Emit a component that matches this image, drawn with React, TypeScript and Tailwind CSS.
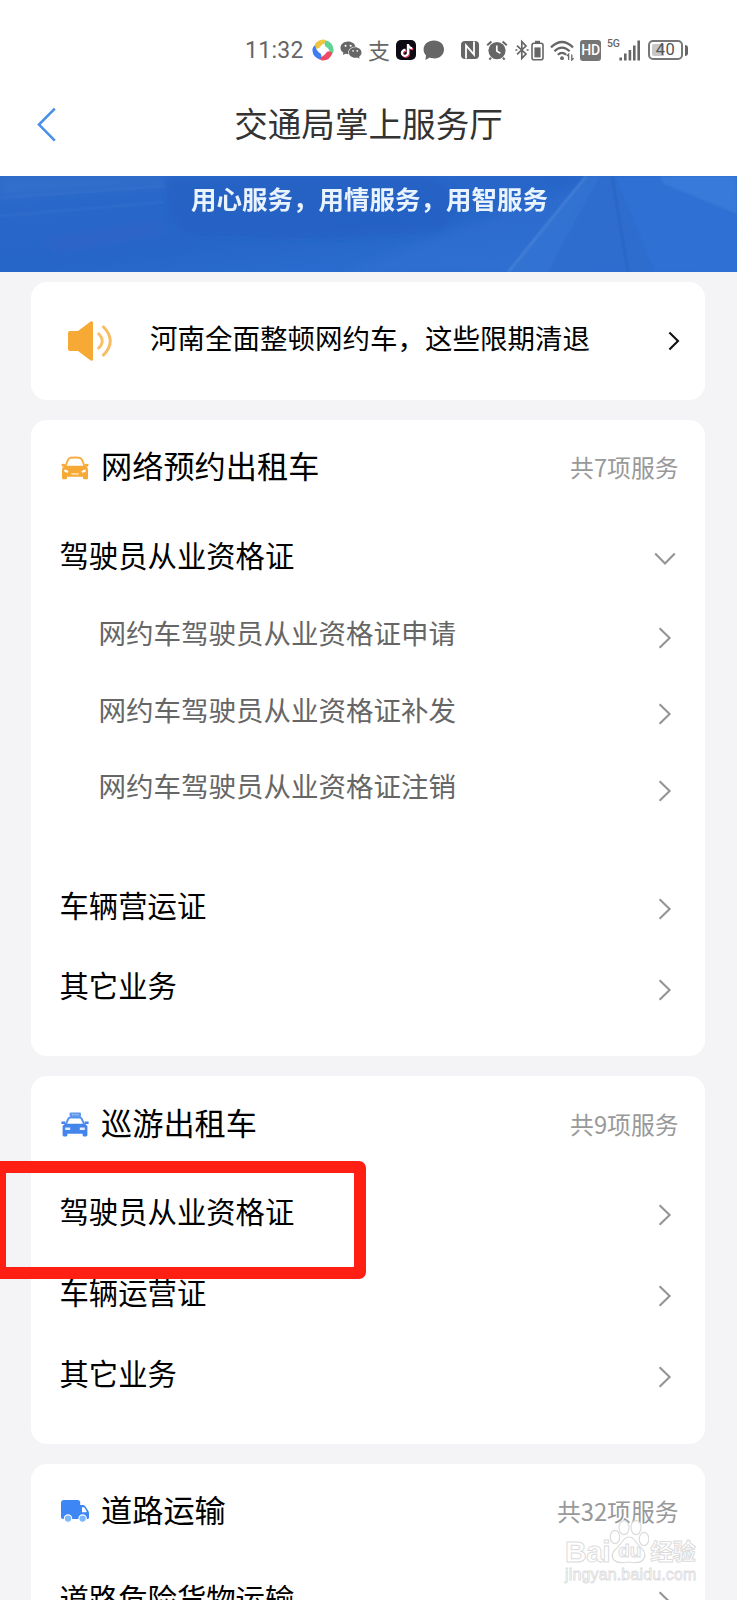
import type { ReactNode } from "react";
import clsx from "clsx";
import { AiFillWechat } from "react-icons/ai";
import { FaTiktok } from "react-icons/fa";

interface ServiceItem {
  label: string;
  children?: string[];
}

interface ServiceGroup {
  title: string;
  count: number;
  icon: ReactNode;
  items: ServiceItem[];
}

const CarIcon = () => (
  <svg width="28" height="24" viewBox="0 0 28 24" fill="none">
    <path
      d="M4.4 10.5 L6.8 4.2 Q7.6 2.2 9.8 1.8 Q14 1.3 18.2 1.8 Q20.4 2.2 21.2 4.2 L23.6 10.5"
      stroke="#f7ad40"
      strokeWidth="1.9"
    />
    <path
      d="M3.4 9.8 H24.6 Q27 11.2 27 14 V22 Q27 23.2 25.6 23.2 H23.2 Q22 23.2 22 22 V20.8 H6 V22 Q6 23.2 4.8 23.2 H2.4 Q1 23.2 1 22 V14 Q1 11.2 3.4 9.8Z"
      fill="#f6a935"
    />
    <path d="M.4 8.2 Q2.4 7 4.6 8.8 L3.6 10.4 H1Z M27.6 8.2 Q25.6 7 23.4 8.8 L24.4 10.4 H27Z" fill="#f6a935" />
    <path d="M3.4 13.4 Q6 13.4 7.6 15.4 L7 16.6 Q4.4 16.8 3.2 15.6Z M24.6 13.4 Q22 13.4 20.4 15.4 L21 16.6 Q23.6 16.8 24.8 15.6Z M10 17.6 H18 L17.4 18.6 H10.6Z" fill="#fff" />
  </svg>
);

const TaxiIcon = () => (
  <svg width="28" height="25" viewBox="0 0 28 25" fill="none">
    <rect x="8.6" y=".6" width="11.4" height="4.4" rx="1" fill="#5f98ee" />
    <path d="M11 2.8 H18" stroke="#b9d3fa" strokeWidth="1.1" strokeDasharray="1.4 .7" />
    <path d="M4.8 12.4 L7.2 7 Q7.9 5.5 9.6 5.5 H18.4 Q20.1 5.5 20.8 7 L23.2 12.4" stroke="#5593ed" strokeWidth="1.9" />
    <path
      d="M4 11.8 H24 L26.4 14 V23 Q26.4 24.4 25 24.4 H22.8 Q21.6 24.4 21.6 23 V21.8 H6.4 V23 Q6.4 24.4 5.2 24.4 H3 Q1.6 24.4 1.6 23 V14Z"
      fill="#4385ea"
    />
    <path d="M.4 9.6 H4.4 L4 12 H.4Z M27.6 9.6 H23.6 L24 12 H27.6Z" fill="#4385ea" />
    <path d="M4.2 15.4 H9.2 V18 H4.2Z M18.8 15.4 H23.8 V18 H18.8Z" fill="#e4eefd" />
  </svg>
);

const TruckIcon = () => (
  <svg width="29" height="23" viewBox="0 0 29 23">
    <path d="M3 0 H16.6 Q19.2 0 19.2 2.6 V5 H21.8 Q23.4 5 24.4 6.4 L27.4 11 Q28 12 28 13.2 V17.4 Q28 19 26.4 19 H2 Q0 19 0 17 V3 Q0 0 3 0Z" fill="#3c86f6" />
    <path d="M21 7.2 H22.4 Q23.2 7.2 23.7 8 L25.6 11.2 Q26 12.2 25 12.2 H21Z" fill="#fff" />
    <circle cx="7" cy="18.6" r="3.7" fill="#7cb6fb" stroke="#fff" strokeWidth="1.1" />
    <circle cx="21.6" cy="18.6" r="3.7" fill="#7cb6fb" stroke="#fff" strokeWidth="1.1" />
  </svg>
);

const groups: ServiceGroup[] = [
  {
    title: "网络预约出租车",
    count: 7,
    icon: <CarIcon />,
    items: [
      {
        label: "驾驶员从业资格证",
        children: [
          "网约车驾驶员从业资格证申请",
          "网约车驾驶员从业资格证补发",
          "网约车驾驶员从业资格证注销",
        ],
      },
      { label: "车辆营运证" },
      { label: "其它业务" },
    ],
  },
  {
    title: "巡游出租车",
    count: 9,
    icon: <TaxiIcon />,
    items: [{ label: "驾驶员从业资格证" }, { label: "车辆运营证" }, { label: "其它业务" }],
  },
  {
    title: "道路运输",
    count: 32,
    icon: <TruckIcon />,
    items: [{ label: "道路危险货物运输" }],
  },
];

const Chevron = ({ open }: { open?: boolean }) => (
  <svg
    width="22"
    height="22"
    viewBox="0 0 22 22"
    fill="none"
    stroke="#949494"
    strokeWidth="2.1"
    className={clsx("mt-[5px] shrink-0", open && "rotate-90")}
  >
    <path d="M5.6 1.2 L15.6 11 L5.6 20.8" />
  </svg>
);

const StatusBar = () => (
  <div className="flex h-[76px] items-center pt-6 pl-[245px] text-[#666]">
    <span className="w-[60px] font-[Roboto] text-[23px] leading-none tracking-[0.3px] whitespace-nowrap">11:32</span>
    <svg className="ml-[7px]" width="22" height="22" viewBox="0 0 22 22">
      <path d="M1.6 8.4 Q3.6 .8 11.2 .4 Q14.8 .8 15.2 3.4 Q10 4.4 7.4 8.8 Q4 10.8 1.6 8.4Z" fill="#f0c545" />
      <path d="M14.2 1.6 Q21 3.6 21.6 10.8 Q21.6 14.4 18.8 15.6 Q18 10 13.2 7.2 Q11.6 3.8 14.2 1.6Z" fill="#5fd492" />
      <path d="M20.4 14 Q18 21.4 10.8 21.6 Q7.2 21.2 6.8 18.6 Q12 17.6 14.6 13.2 Q18 11.2 20.4 14Z" fill="#ee4a63" />
      <path d="M7.8 20.4 Q1 18.4 .4 11.2 Q.4 7.6 3.2 6.4 Q4 12 8.8 14.8 Q10.4 18.2 7.8 20.4Z" fill="#3f7df0" />
    </svg>
    <AiFillWechat className="ml-[5px] shrink-0" size={24} />
    <span className="mb-[3px] ml-[5px] w-[22px] text-[22px] leading-none">支</span>
    <div className="ml-[6px] flex h-5 w-5 items-center justify-center rounded-[5px] bg-[#0c0b14]">
      <FaTiktok className="text-white drop-shadow-[1px_1px_0_#e8365c]" size={13} />
    </div>
    <svg className="ml-[7px]" width="22" height="21" viewBox="0 0 22 21" fill="currentColor">
      <path d="M11 .6 C17 .6 21 4.4 21 9.6 C21 14.8 17 18.4 11.4 18.4 C9.4 18.4 8.2 18.2 6.8 17.6 L2.4 20 L3 15.4 C1.4 13.8 .6 12 .6 9.6 C.6 4.4 5 .6 11 .6Z" />
    </svg>
    <svg className="ml-[15px]" width="20" height="20" viewBox="0 0 20 20" fill="none">
      <path d="M5 1 H15 Q19 1 19 5 V15 Q19 19 15 19 H5 Q1 19 1 15 V5 Q1 1 5 1Z" fill="currentColor" />
      <path d="M6 18.6 V5.4 L14 14.6 V1.4" stroke="#fff" strokeWidth="1.8" />
    </svg>
    <svg className="ml-[6px]" width="22" height="21" viewBox="0 0 22 21" fill="none">
      <circle cx="11" cy="10.6" r="8.6" fill="currentColor" />
      <path d="M1.2 5.2 L5.4 1.4 M20.8 5.2 L16.6 1.4 M5 17.6 L3.4 19.6 M17 17.6 L18.6 19.6" stroke="currentColor" strokeWidth="2" />
      <path d="M10.8 5.6 V11 L14.4 13.4" stroke="#fff" strokeWidth="1.7" />
    </svg>
    <svg className="ml-[7px]" width="14" height="22" viewBox="0 0 14 22" fill="none" stroke="currentColor" strokeWidth="1.7">
      <path d="M2 6.6 L11 15 L6.8 19.4 V2.6 L11 7 L2 15.4" />
      <path d="M.4 11 H2.4 M11.6 11 H13.6" />
    </svg>
    <svg className="ml-[2px]" width="13" height="21" viewBox="0 0 13 21" fill="none">
      <path d="M4 .8 H9 V3 H4Z" fill="currentColor" />
      <rect x="1" y="3.2" width="11" height="16.6" rx="2" stroke="currentColor" strokeWidth="1.6" />
      <path d="M3.4 7.4 H9.6 V17.4 H3.4Z" fill="currentColor" />
    </svg>
    <svg className="ml-[6px]" width="25" height="21" viewBox="0 0 25 21" fill="none" stroke="currentColor" strokeWidth="2.2">
      <path d="M1 7.4 Q12 -3.4 23 7.4" />
      <path d="M4.4 11.2 Q12 4 19.6 11.2" />
      <path d="M7.8 14.8 Q12 11 16.2 14.8" />
      <circle cx="12" cy="18.2" r="1.9" fill="currentColor" stroke="none" />
      <path d="M18.6 20 V14.2 L16.8 16 M21.8 14.4 V20 L23.6 18.2" strokeWidth="1.3" />
    </svg>
    <span className="ml-[5px] flex h-[21px] w-[21px] items-center justify-center rounded-[3px] bg-[#757575] font-[Roboto] text-[14px] font-medium tracking-tight text-white">
      HD
    </span>
    <span className="mb-[11px] ml-[6px] w-[12px] font-[Roboto] text-[10.5px] leading-none font-medium tracking-tight">5G</span>
    <svg width="22" height="21" viewBox="0 0 22 21" fill="currentColor">
      <path d="M.4 17.4 H3 V20.6 H.4Z M5 13.6 H7.6 V20.6 H5Z M9.6 10 H12.2 V20.6 H9.6Z M14 5.4 H16.6 V20.6 H14Z M18.4 .4 H21 V20.6 H18.4Z" />
    </svg>
    <div className="ml-[7px] flex h-5 w-[35px] rounded-[5px] border-2 border-[#777] p-[2px]">
      <span className="flex flex-1 items-center justify-center rounded-[2px] bg-linear-to-r from-[#c8c8c8] from-45% to-white to-45% font-[Roboto] text-[16.5px] leading-none tracking-wide text-[#555]">
        40
      </span>
    </div>
    <div className="ml-[2px] h-[11px] w-[3px] rounded-r-sm bg-[#666]" />
  </div>
);

const Header = () => (
  <header className="relative flex h-[100px] items-center justify-center pb-[6px]">
    <svg className="absolute top-[31px] left-[36px]" width="22" height="36" viewBox="0 0 22 36" fill="none">
      <path d="M18.8 1.6 L3 17.6 L18.8 33.6" stroke="#4a8fe8" strokeWidth="2.6" />
    </svg>
    <h1 className="text-[33.6px] leading-none text-[#333]">交通局掌上服务厅</h1>
  </header>
);

const Banner = () => (
  <div className="relative flex h-24 justify-center overflow-hidden bg-linear-to-br from-[#2a69c9] via-[#2766c9] to-[#2c72d6]">
    <svg className="absolute inset-0" width="737" height="96" viewBox="0 0 737 96">
      <defs>
        <filter id="soft" x="-10%" y="-10%" width="120%" height="120%">
          <feGaussianBlur stdDeviation="4" />
        </filter>
        <filter id="edge">
          <feGaussianBlur stdDeviation="1" />
        </filter>
      </defs>
      <g filter="url(#soft)">
        <path d="M0 0 H165 V10 L0 22Z" fill="#3a74cc" opacity=".45" />
        <path d="M166 0 H420 L470 20 L440 56 L330 62 L190 60 L168 40Z" fill="#1f5dbf" opacity=".5" />
        <path d="M40 64 L150 46 L170 56 L60 76Z" fill="#3a5fc4" opacity=".4" />
        <path d="M340 96 L585 8 L560 50 L510 96Z" fill="#2f70d2" opacity=".5" />
      </g>
      <g filter="url(#edge)">
        <path d="M0 22 L165 10 M0 40 L165 26" stroke="#4a80d4" strokeWidth="1.5" opacity=".35" />
        <path d="M586 0 L508 96 H548 L600 0Z" fill="#3674d2" opacity=".8" />
        <path d="M600 0 L548 96 H654 L614 0Z" fill="#2f6dcd" />
        <path d="M614 0 L654 96 H737 V38 L662 0Z" fill="#2d70d3" />
        <path d="M660 0 L664 8 L737 38 V0Z" fill="#377ad9" />
        <path d="M586 0 L508 96" stroke="#5c95e0" strokeWidth="1.4" opacity=".7" />
        <path d="M612 0 L628 96" stroke="#235bb8" strokeWidth="1.4" opacity=".7" />
      </g>
    </svg>
    <p className="relative mt-[9px] ml-[2px] text-[25.5px] leading-[26px] font-bold whitespace-nowrap text-[#e9f3fe]">
      用心服务，用情服务，用智服务
    </p>
  </div>
);

const Notice = () => (
  <div className="mt-[10px] flex h-[118px] items-center rounded-[16px] bg-white pr-[24px] pl-[36px]">
    <svg width="46" height="42" viewBox="0 0 46 42" fill="none">
      <path d="M3 11 H11 L23.6 1.6 Q26 .6 26 3 V39 Q26 41.4 23.6 40.4 L11 31 H3 Q1 31 1 29 V13 Q1 11 3 11Z" fill="#f6a935" />
      <path d="M30.8 13 Q39.6 21 30.8 29" stroke="#f9c06a" strokeWidth="3" />
      <path d="M35.6 6 Q51 21 35.6 36" stroke="#f8bc62" strokeWidth="3" />
    </svg>
    <span className="mb-[7px] ml-[37px] flex-1 text-[27.5px] leading-none whitespace-nowrap text-black">
      河南全面整顿网约车，这些限期清退
    </span>
    <svg width="14" height="22" viewBox="0 0 14 22" fill="none">
      <path d="M2.4 2.4 L11 11 L2.4 19.6" stroke="#111" strokeWidth="2.1" />
    </svg>
  </div>
);

const Row = ({ item }: { item: ServiceItem }) => (
  <>
    <div className="flex h-[80.7px] items-center justify-between pr-[29px] pl-[28.5px]">
      <span className="mb-[4px] text-[29.35px] leading-none text-black">{item.label}</span>
      <Chevron open={!!item.children} />
    </div>
    {item.children && (
      <div className="mb-[39px]">
        {item.children.map((child) => (
          <div key={child} className="flex h-[76.8px] items-center justify-between pr-[29px] pl-[67.5px]">
            <span className="mb-[5px] text-[27.5px] leading-none text-[#666]">{child}</span>
            <Chevron />
          </div>
        ))}
      </div>
    )}
  </>
);

const ServiceCard = ({ group }: { group: ServiceGroup }) => (
  <section className="mt-5 rounded-[16px] bg-white pb-[29px]">
    <div className="flex h-24 items-center pr-[26.5px] pl-[29.5px]">
      <div className="w-[40.5px]">{group.icon}</div>
      <h2 className="mb-[6px] flex-1 text-[31.2px] leading-none text-black">{group.title}</h2>
      <span className="mb-[2px] text-[23.8px] leading-none text-[#999]">共{group.count}项服务</span>
    </div>
    {group.items.map((item) => (
      <Row key={item.label} item={item} />
    ))}
  </section>
);

const Watermark = () => (
  <div className="absolute top-[1519px] left-[565px] w-[140px] font-['Liberation_Sans','Noto_Sans_CJK_SC',sans-serif] font-bold text-white [-webkit-text-stroke:1px_#dcdcdc]">
    <div className="flex h-[46px] items-end">
      <span className="text-[30px] leading-[26px] tracking-[-0.5px]">Bai</span>
      <div className="relative ml-[-1px] h-[46px] w-[40px]">
        <svg width="40" height="46" viewBox="0 0 40 46" fill="#fff" stroke="#dcdcdc" strokeWidth="1.2">
          <ellipse cx="6" cy="18" rx="4.8" ry="6.6" />
          <ellipse cx="15" cy="8.6" rx="5" ry="7" />
          <ellipse cx="27" cy="8.6" rx="5" ry="7" />
          <ellipse cx="35" cy="20" rx="4.8" ry="6.6" />
          <path d="M20 18 Q24 18 27 23 Q30 27 34 31 Q38 36 34 41 Q30 45 20 43 Q9 45 5 41 Q1 36 6 31 Q10 27 13 23 Q16 18 20 18Z" />
        </svg>
        <span className="absolute top-[22px] left-[9px] text-[19px] leading-none">du</span>
      </div>
      <span className="ml-[1px] text-[23px] leading-[26px] tracking-[-0.5px]">经验</span>
    </div>
    <div className="text-[15.9px] leading-[19px] font-normal tracking-[0.2px] [-webkit-text-stroke:0.8px_#dcdcdc]">jingyan.baidu.com</div>
  </div>
);

export default function App() {
  return (
    <div className="relative h-[1600px] w-[737px] overflow-hidden bg-[#f4f4f7] font-['Noto_Sans_CJK_SC',sans-serif]">
      <div className="bg-white">
        <StatusBar />
        <Header />
      </div>
      <Banner />
      <main className="mr-8 ml-[31px]">
        <Notice />
        {groups.map((group) => (
          <ServiceCard key={group.title} group={group} />
        ))}
      </main>
      {/* highlight frame around the taxi driver licence entry */}
      <div className="absolute top-[1161px] left-[-6px] h-[117.5px] w-[371.5px] rounded-[7px] border-[12.5px] border-[#ff2013]" />
      <Watermark />
    </div>
  );
}
